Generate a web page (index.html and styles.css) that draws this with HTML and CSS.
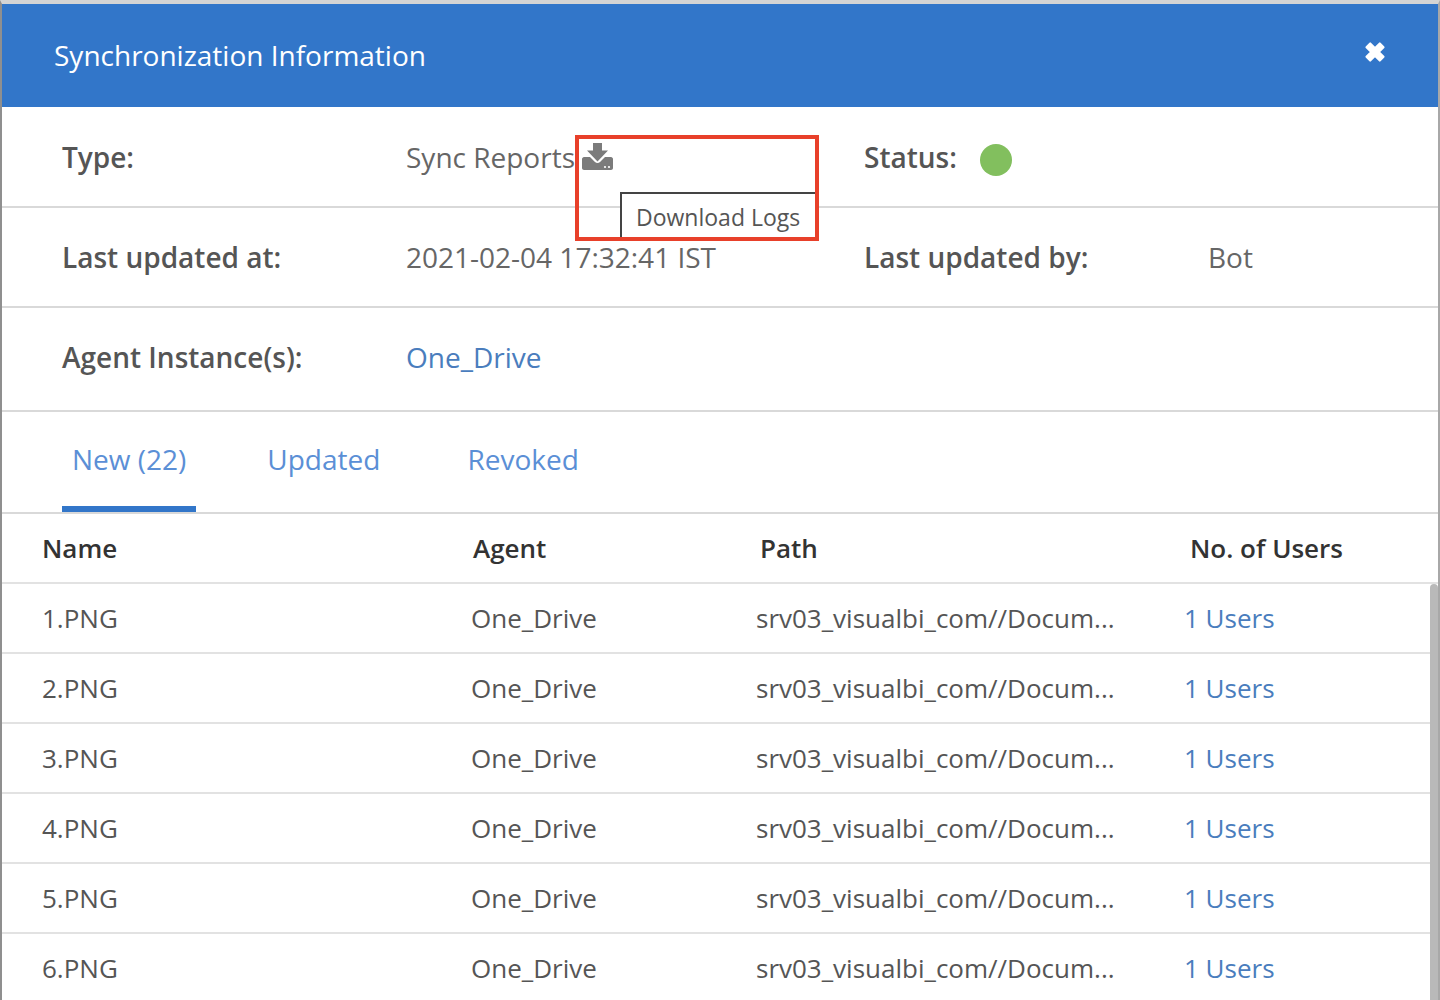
FILE: index.html
```html
<!DOCTYPE html>
<html lang="en">
<head>
  <meta charset="UTF-8" />
  <title>Synchronization Information</title>
  <link rel="stylesheet" href="styles.css">
</head>
<body>
  <div class="modal">
    <div class="modal-header">
      <span class="modal-title">Synchronization Information</span>
      <svg class="close-icon" viewBox="0 0 24 24" width="24" height="24"><path d="M3.500 7.200 7.200 3.500 12 8.300 16.800 3.500 20.500 7.200 15.700 12 20.500 16.800 16.800 20.500 12 15.700 7.200 20.500 3.500 16.800 8.300 12Z" fill="#fff" stroke="#fff" stroke-width="2.200" stroke-linejoin="round"/></svg>
    </div>

    <div class="info-row row-type">
      <span class="info-label">Type:</span>
      <span class="info-value type-value">Sync Reports
        <svg class="download-icon" viewBox="0 0 31 27" width="31" height="27"><path d="M11 0h9v7.500h6L15.500 18.500 5 7.500h6Z" fill="#7b7b7b"/><path d="M2 14h6l5 5c1.400 1.400 3.600 1.400 5 0l5-5h6c1 0 2 1 2 2v9c0 1-1 2-2 2H2c-1 0-2-1-2-2v-9c0-1 1-2 2-2Z" fill="#7b7b7b"/><circle cx="23" cy="24" r="1.100" fill="#fff"/><circle cx="27" cy="24" r="1.100" fill="#fff"/></svg>
      </span>
      <span class="info-label">Status:</span>
      <span class="status-dot"></span>
    </div>
    <div class="info-row">
      <span class="info-label">Last updated at:</span>
      <span class="info-value">2021-02-04 17:32:41 IST</span>
      <span class="info-label">Last updated by:</span>
      <span class="info-value">Bot</span>
    </div>
    <div class="info-row row-agent">
      <span class="info-label">Agent Instance(s):</span>
      <a class="info-value link">One_Drive</a>
    </div>

    <div class="tabs">
      <a class="tab active">New (22)</a>
      <a class="tab tab-updated">Updated</a>
      <a class="tab tab-revoked">Revoked</a>
    </div>

    <div class="table-head">
      <span>Name</span>
      <span>Agent</span>
      <span>Path</span>
      <span>No. of Users</span>
    </div>
    <div class="table-body">
      <div class="table-rows">
        <div class="table-row"><span>1.PNG</span><span>One_Drive</span><span>srv03_visualbi_com//Docum...</span><a class="link">1 Users</a></div>
        <div class="table-row"><span>2.PNG</span><span>One_Drive</span><span>srv03_visualbi_com//Docum...</span><a class="link">1 Users</a></div>
        <div class="table-row"><span>3.PNG</span><span>One_Drive</span><span>srv03_visualbi_com//Docum...</span><a class="link">1 Users</a></div>
        <div class="table-row"><span>4.PNG</span><span>One_Drive</span><span>srv03_visualbi_com//Docum...</span><a class="link">1 Users</a></div>
        <div class="table-row"><span>5.PNG</span><span>One_Drive</span><span>srv03_visualbi_com//Docum...</span><a class="link">1 Users</a></div>
        <div class="table-row"><span>6.PNG</span><span>One_Drive</span><span>srv03_visualbi_com//Docum...</span><a class="link">1 Users</a></div>
      </div>
      <div class="scrollbar"></div>
    </div>

    <div class="tooltip">Download Logs</div>
    <div class="callout"></div>
  </div>
</body>
</html>
```

FILE: styles.css
```css
html, body {
  margin: 0;
  height: 1000px;
  overflow: hidden;
  background: #fff;
}
body {
  font-family: "Open Sans", sans-serif;
  color: #555;
}
.modal {
  position: relative;
  height: 996px;
  border-top: 4px solid #d4d4d4;
  border-left: 2px solid #8f8f8f;
  border-right: 2px solid #a8a8a8;
  overflow: hidden;
}
.modal-header {
  display: flex;
  justify-content: space-between;
  align-items: flex-start;
  height: 103px;
  padding: 0 51px 0 52px;
  background: #3276c9;
  color: #fff;
}
.modal-title {
  font-size: 28px;
  line-height: 102px;
}
.close-icon {
  margin-top: 36px;
}
/* info rows */
.info-row {
  display: grid;
  grid-template-columns: 344px 458px 344px 1fr;
  align-items: center;
  height: 100px;
  padding-left: 60px;
  border-bottom: 2px solid #d9d9d9;
  font-size: 28px;
  box-sizing: border-box;
}
.row-type {
  height: 101px;
}
.row-agent {
  height: 104px;
  padding-bottom: 4px;
}
.info-label {
  font-weight: 600;
  color: #555;
}
.info-value {
  color: #666;
}
.type-value {
  display: flex;
  align-items: flex-start;
  gap: 7px;
}
.download-icon {
  margin-top: 5px;
}
.status-dot {
  width: 32px;
  height: 32px;
  border-radius: 50%;
  background: #82bf5e;
  margin: 6px 0 0 -228px;
}
.link {
  color: #4a7dbd;
}
/* tabs */
.tabs {
  display: flex;
  height: 102px;
  padding-left: 60px;
  border-bottom: 2px solid #d9d9d9;
  box-sizing: border-box;
  font-size: 28px;
}
.tab {
  display: block;
  padding: 28px 10px 0;
  height: 72px;
  color: #5b8fd6;
}
.tab.active {
  border-bottom: 6px solid #3276c9;
  height: 66px;
}
.tab-updated {
  margin-left: 61px;
}
.tab-revoked {
  margin-left: 67px;
}
/* table */
.table-head {
  display: grid;
  grid-template-columns: 431px 287px 430px 1fr;
  align-items: center;
  height: 70px;
  padding-left: 40px;
  box-sizing: border-box;
  border-bottom: 2px solid #e2e2e2;
  font-size: 26px;
  font-weight: 600;
  color: #333;
}
.table-body {
  display: flex;
}
.table-rows {
  flex: 1;
}
.table-row {
  display: grid;
  grid-template-columns: 429px 285px 428px 1fr;
  align-items: center;
  height: 70px;
  padding-left: 40px;
  box-sizing: border-box;
  border-bottom: 2px solid #e2e2e2;
  font-size: 26px;
  color: #555;
}
.scrollbar {
  width: 8px;
  height: 420px;
  background: #b9b9b9;
  border-radius: 4px 4px 0 0;
}
/* overlays */
.tooltip {
  position: absolute;
  left: 618px;
  top: 188px;
  width: 196px;
  height: 48px;
  box-sizing: border-box;
  padding: 7px 0 0 14px;
  background: #fff;
  border: 2px solid #444;
  border-right: 0;
  font-size: 23px;
  color: #555;
}
.callout {
  position: absolute;
  left: 573px;
  top: 131px;
  width: 244px;
  height: 106px;
  box-sizing: border-box;
  border: 4px solid #e8402a;
}
```
